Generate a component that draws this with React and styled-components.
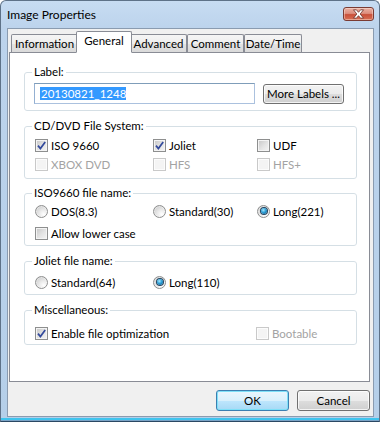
import React from "react";
import styled, { createGlobalStyle, css } from "styled-components";

const Global = createGlobalStyle`
  html, body { margin: 0; padding: 0; background: #fff; }
  body { font-family: Lato, "Noto Sans", sans-serif; font-size: 11.5px; color: #000; }
`;

const Window = styled.div`
  width: 380px;
  height: 422px;
  box-sizing: border-box;
  border: 1px solid #5e7288;
  border-bottom-color: #2b4863;
  border-radius: 6px 6px 0 0;
  background: linear-gradient(180deg, #c7dcf2 0px, #bcd3ec 28px, #b5cfe9 100%);
  display: flex;
  flex-direction: column;
  padding: 0 5px 0 6px;
  overflow: hidden;
`;

const TitleBar = styled.div`
  height: 27px;
  display: flex;
  align-items: flex-start;
  justify-content: space-between;
`;

const Title = styled.span`
  font-size: 12px;
  color: #000;
  margin-top: 6px;
`;

const CloseBtn = styled.div`
  width: 31px;
  height: 14px;
  margin-top: 6px;
  box-sizing: border-box;
  border: 1px solid #7a3b33;
  border-radius: 3px;
  background: linear-gradient(180deg, #eab1a3 0%, #dd8e7e 45%, #c9503a 55%, #d86f55 100%);
  display: flex;
  align-items: center;
  justify-content: center;
  box-shadow: inset 0 0 0 1px rgba(255, 230, 220, 0.45);
`;

const Client = styled.div`
  flex: 1;
  background: #f0f0f0;
  border: 1px solid #8a9bb0;
  display: flex;
  flex-direction: column;
  padding: 2px 3px 0 1px;
`;

const TabRow = styled.div`
  display: flex;
  align-items: flex-end;
  height: 21px;
  padding-left: 2px;
  position: relative;
  z-index: 1;
`;

const Tab = styled.div`
  box-sizing: border-box;
  width: ${p => p.$w}px;
  height: ${p => (p.$active ? "22px" : "18px")};
  margin: 0 ${p => (p.$active ? "-2px" : "0")};
  border: 1px solid #898c95;
  border-bottom: ${p => (p.$active ? "1px solid #fff" : "none")};
  border-radius: 2px 2px 0 0;
  background: ${p =>
    p.$active ? "#fff" : "linear-gradient(180deg, #f5f5f5 0%, #eeeeee 50%, #e3e3e3 51%, #dadada 100%)"};
  display: flex;
  align-items: center;
  justify-content: center;
  padding-bottom: ${p => (p.$active ? "3px" : "0")};
  color: #000;
  position: relative;
  z-index: ${p => (p.$active ? 2 : 1)};
  margin-bottom: ${p => (p.$active ? "-1px" : "0")};
`;

const Panel = styled.div`
  height: 330px;
  box-sizing: border-box;
  background: #fff;
  border: 1px solid #898c95;
  padding: 12px 12px 0 14px;
  display: flex;
  flex-direction: column;
`;

const Group = styled.fieldset`
  margin: ${p => p.$mt || 0}px 0 0 0;
  border: 1px solid #d5dfe5;
  border-radius: 3px;
  padding: ${p => p.$pt}px 9px ${p => p.$pb}px 10px;
  display: flex;
  flex-direction: column;
  gap: ${p => p.$gap || 0}px;
  min-width: 0;
`;

const Legend = styled.legend`
  padding: 0 2px;
  margin-left: -3px;
  color: #000;
  line-height: 14px;
  height: 14px;
`;

const Row = styled.div`
  display: grid;
  grid-template-columns: ${p => p.$cols || "118px 104px 1fr"};
  align-items: center;
  height: ${p => p.$h || 19}px;
`;

const InputRow = styled.div`
  display: flex;
  align-items: center;
  gap: 8px;
  margin-left: -1px;
`;

const TextBox = styled.div`
  width: 221px;
  height: 21px;
  box-sizing: border-box;
  border: 1px solid #abc1de;
  border-top-color: #7f9db9;
  border-left-color: #94b0d2;
  background: #fff;
  padding: 0 5px;
  display: flex;
  align-items: center;
`;

const Selected = styled.span`
  background: #3399ff;
  color: #fff;
  line-height: 13px;
  padding: 0 0 0 1px;
`;

const Button = styled.div`
  box-sizing: border-box;
  width: ${p => p.$w || 73}px;
  height: ${p => p.$h || 21}px;
  border: 1px solid ${p => (p.$default ? "#3c7fb1" : "#707070")};
  border-radius: 3px;
  background: ${p =>
    p.$default
      ? "linear-gradient(180deg, #eaf6fd 0%, #d9f0fc 50%, #bee6fd 51%, #a7d9f5 100%)"
      : "linear-gradient(180deg, #f2f2f2 0%, #ebebeb 50%, #dddddd 51%, #cfcfcf 100%)"};
  box-shadow: inset 0 0 0 1px ${p => (p.$default ? "#7fe0f8" : "rgba(255,255,255,0.75)")};
  display: flex;
  align-items: center;
  justify-content: center;
  white-space: nowrap;
  color: #000;
`;

const OptWrap = styled.label`
  display: flex;
  align-items: center;
  gap: 3px;
  color: ${p => (p.$disabled ? "#a3a3a3" : "#000")};
  white-space: nowrap;
`;

const Box = styled.span`
  width: 13px;
  height: 13px;
  box-sizing: border-box;
  border: 1px solid ${p => (p.$disabled ? "#c9c9c9" : "#8e8f8f")};
  display: inline-flex;
  align-items: center;
  justify-content: center;
  flex-shrink: 0;
  ${p =>
    p.$disabled
      ? css`
          background: #f4f4f4;
          box-shadow: inset 0 0 0 1px #fcfcfc;
        `
      : css`
          background: linear-gradient(135deg, #c6c6c6 0%, #e4e4e4 55%, #f4f4f4 100%);
          box-shadow: inset 0 0 0 1px #f4f4f4;
        `}
`;

const Round = styled.span`
  width: 13px;
  height: 13px;
  box-sizing: border-box;
  border-radius: 50%;
  border: 1px solid #8e8f8f;
  background: radial-gradient(circle at 70% 75%, #ffffff 0%, #ececec 35%, #c2c2c2 100%);
  box-shadow: inset 0 0 0 1px rgba(255,255,255,0.4);
  display: inline-flex;
  align-items: center;
  justify-content: center;
  flex-shrink: 0;
`;

const Dot = styled.span`
  width: 6px;
  height: 6px;
  border-radius: 50%;
  background: radial-gradient(circle at 40% 35%, #a8e8ff 0%, #2c9fd6 45%, #0b4f80 100%);
  box-shadow: 0 0 0 1px #24435e;
`;

const Check = () => (
  <svg width="9" height="9" viewBox="0 0 9 9">
    <path d="M1 4.6 L3.4 7.6 L8.2 1" fill="none" stroke="#334a9c" strokeWidth="1.7" />
  </svg>
);

const CheckBox = ({ label, checked, disabled }) => (
  <OptWrap $disabled={disabled}>
    <Box $disabled={disabled}>{checked && <Check />}</Box>
    {label}
  </OptWrap>
);

const Radio = ({ label, checked }) => (
  <OptWrap>
    <Round>{checked && <Dot />}</Round>
    {label}
  </OptWrap>
);

const Footer = styled.div`
  flex: 1;
  display: flex;
  justify-content: flex-end;
  align-items: flex-start;
  gap: 8px;
  padding-top: 8px;
`;

const BottomEdge = styled.div`
  height: 4px;
  margin: 0 -5px 0 -6px;
  background: linear-gradient(180deg, #b5cfe9 0px, #b5cfe9 1px, #3fc4ee 1px, #3fc4ee 3px, #7aa3c6 3px);
`;

const CloseIcon = () => (
  <svg width="13" height="10" viewBox="0 0 13 10">
    <path
      d="M1.5 0.8 L4.4 0.8 L6.5 3.3 L8.6 0.8 L11.5 0.8 L8.2 5 L11.5 9.2 L8.6 9.2 L6.5 6.7 L4.4 9.2 L1.5 9.2 L4.8 5 Z"
      fill="#fff"
      stroke="#6a3028"
      strokeWidth="0.8"
    />
  </svg>
);

export default function App() {
  return (
    <>
      <Global />
      <Window>
        <TitleBar>
          <Title>Image Properties</Title>
          <CloseBtn>
            <CloseIcon />
          </CloseBtn>
        </TitleBar>
        <Client>
          <TabRow>
            <Tab $w={67}>Information</Tab>
            <Tab $w={56} $active>General</Tab>
            <Tab $w={57}>Advanced</Tab>
            <Tab $w={57}>Comment</Tab>
            <Tab $w={58}>Date/Time</Tab>
          </TabRow>
          <Panel>
            <Group $pt={4} $pb={6}>
              <Legend>Label:</Legend>
              <InputRow>
                <TextBox>
                  <Selected>20130821_1248</Selected>
                </TextBox>
                <Button $w={81} $h={20}>More Labels ...</Button>
              </InputRow>
            </Group>
            <Group $mt={8} $pt={3} $pb={4}>
              <Legend>CD/DVD File System:</Legend>
              <Row>
                <CheckBox label="ISO 9660" checked />
                <CheckBox label="Joliet" checked />
                <CheckBox label="UDF" />
              </Row>
              <Row>
                <CheckBox label="XBOX DVD" disabled />
                <CheckBox label="HFS" disabled />
                <CheckBox label="HFS+" disabled />
              </Row>
            </Group>
            <Group $mt={7} $pt={1} $pb={2} $gap={2}>
              <Legend>ISO9660 file name:</Legend>
              <Row $h={20}>
                <Radio label="DOS(8.3)" />
                <Radio label="Standard(30)" />
                <Radio label="Long(221)" checked />
              </Row>
              <Row $h={20}>
                <CheckBox label="Allow lower case" />
              </Row>
            </Group>
            <Group $mt={8} $pt={4} $pb={2}>
              <Legend>Joliet file name:</Legend>
              <Row $cols="118px 1fr" $h={20}>
                <Radio label="Standard(64)" />
                <Radio label="Long(110)" checked />
              </Row>
            </Group>
            <Group $mt={8} $pt={6} $pb={1}>
              <Legend>Miscellaneous:</Legend>
              <Row $cols="221px 1fr" $h={20}>
                <CheckBox label="Enable file optimization" checked />
                <CheckBox label="Bootable" disabled />
              </Row>
            </Group>
          </Panel>
          <Footer>
            <Button $default>OK</Button>
            <Button>Cancel</Button>
          </Footer>
        </Client>
        <BottomEdge />
      </Window>
    </>
  );
}
